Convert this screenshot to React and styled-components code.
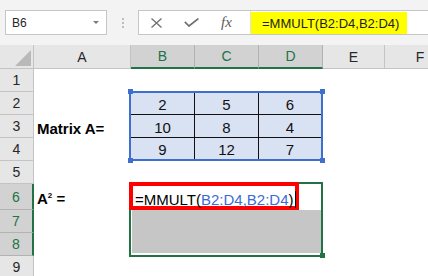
import styled, { createGlobalStyle } from "styled-components";

const GlobalStyle = createGlobalStyle`
  html, body {
    margin: 0;
    padding: 0;
    background: #fff;
  }
  body {
    font-family: "Liberation Sans", Arial, sans-serif;
  }
`;

const COLUMNS = ["A", "B", "C", "D", "E", "F"];
const ROWS = [1, 2, 3, 4, 5, 6, 7, 8, 9];
const SELECTED_COLS = ["B", "C", "D"];
const SELECTED_ROWS = [6, 7, 8];
const MATRIX = [
  [2, 5, 6],
  [10, 8, 4],
  [9, 12, 7],
];

export default function App() {
  return (
    <Page>
      <GlobalStyle />
      <Toolbar>
        <NameBox>
          <span>B6</span>
          <Caret />
        </NameBox>
        <Grip>
          <i />
          <i />
          <i />
        </Grip>
        <FormulaBox>
          <ToolButton>
            <svg width="11" height="10" viewBox="0 0 11 10">
              <path d="M0.5 0.5 L10.5 9.5 M10.5 0.5 L0.5 9.5" stroke="#6f6f6f" strokeWidth="1.3" fill="none" />
            </svg>
          </ToolButton>
          <ToolButton>
            <svg width="15" height="9" viewBox="0 0 15 9">
              <path d="M0.8 3.8 L5 8 L14.4 0.6" stroke="#6f6f6f" strokeWidth="1.7" fill="none" />
            </svg>
          </ToolButton>
          <ToolButton>
            <Fx>fx</Fx>
          </ToolButton>
          <FormulaInput>
            <Highlight>=MMULT(B2:D4,B2:D4)</Highlight>
          </FormulaInput>
        </FormulaBox>
      </Toolbar>

      <Sheet>
        <Corner>
          <svg width="16" height="16" viewBox="0 0 16 16">
            <polygon points="16,0 16,16 0,16" fill="#b9b9b9" />
          </svg>
        </Corner>
        {COLUMNS.map((c, i) => (
          <ColHeader key={c} $col={i + 2} $selected={SELECTED_COLS.includes(c)}>
            {c}
          </ColHeader>
        ))}
        {ROWS.map(r => (
          <RowHeader key={r} $row={r + 1} $selected={SELECTED_ROWS.includes(r)}>
            {r}
          </RowHeader>
        ))}

        <Label $row={4} $pad={1}>
          <span>Matrix A=</span>
        </Label>
        <Label $row={7} $pad={3}>
          <span>
            A<Sup>2</Sup> =
          </span>
        </Label>

        <Matrix>
          {MATRIX.map((row, ri) =>
            row.map((v, ci) => (
              <MatrixCell key={`${ri}-${ci}`} $lastCol={ci === 2} $lastRow={ri === 2}>
                {v}
              </MatrixCell>
            ))
          )}
          <Handle $v="top" $h="left" />
          <Handle $v="top" $h="right" />
          <Handle $v="bottom" $h="left" />
          <Handle $v="bottom" $h="right" />
        </Matrix>

        <Selection>
          <EditCell>
            =MMULT(<Ref>B2:D4,B2:D4</Ref>)<TextCursor />
          </EditCell>
          <GreyFill />
          <FillHandle />
        </Selection>
      </Sheet>
    </Page>
  );
}

const Page = styled.div`
  width: 428px;
  height: 276px;
  overflow: hidden;
  background: #fff;
`
const Toolbar = styled.div`
  height: 45px;
  box-sizing: border-box;
  display: flex;
  align-items: center;
  padding-left: 5px;
  background: #f3f3f3;
`
const NameBox = styled.div`
  width: 102px;
  height: 25px;
  box-sizing: border-box;
  border: 1px solid #c6c6c6;
  background: #fff;
  display: flex;
  align-items: center;
  justify-content: space-between;
  padding: 0 7px 0 6px;
  font-size: 12px;
  color: #262626;
`
const Caret = styled.span`
  width: 0;
  height: 0;
  border-left: 3px solid transparent;
  border-right: 3px solid transparent;
  border-top: 3px solid #7a7a7a;
`
const Grip = styled.div`
  width: 31px;
  display: flex;
  flex-direction: column;
  align-items: center;
  gap: 2px;
  i {
    width: 2px;
    height: 2px;
    background: #bdbdbd;
  }
`
const FormulaBox = styled.div`
  flex: 1;
  height: 25px;
  box-sizing: border-box;
  display: flex;
  background: #fff;
  border: 1px solid #c6c6c6;
  border-right: none;
`
const ToolButton = styled.div`
  width: 35px;
  display: flex;
  align-items: center;
  justify-content: center;
`
const Fx = styled.span`
  font-family: "Liberation Serif", "Times New Roman", serif;
  font-style: italic;
  font-size: 15px;
  color: #5c5c5c;
`
const FormulaInput = styled.div`
  flex: 1;
  margin-left: 6px;
  border-left: 1px solid #e1e1e1;
  display: flex;
  align-items: center;
`
const Highlight = styled.span`
  height: 22px;
  display: flex;
  align-items: center;
  padding: 1px 8px 0 11px;
  box-sizing: border-box;
  background: #ffff00;
  font-size: 13px;
  color: #1e1e1e;
  white-space: nowrap;
`
const Sheet = styled.div`
  display: grid;
  grid-template-columns: 34px 97px 64px 64px 64px 62px 71px;
  grid-template-rows: 24px repeat(5, 23px) 26px repeat(3, 23px);
`
const Corner = styled.div`
  grid-row: 1;
  grid-column: 1;
  background: #e6e6e6;
  border-right: 1px solid #c4c4c4;
  border-bottom: 1px solid #c4c4c4;
  display: flex;
  align-items: flex-end;
  justify-content: flex-end;
  padding: 0 2px 2px 0;
  svg { display: block; }
`
const ColHeader = styled.div`
  grid-row: 1;
  grid-column: ${p => p.$col};
  display: flex;
  align-items: center;
  justify-content: center;
  background: ${p => (p.$selected ? "#d2d2d2" : "#e6e6e6")};
  border-right: 1px solid ${p => (p.$selected ? "#b2b2b2" : "#c4c4c4")};
  border-bottom: ${p => (p.$selected ? "2px solid #217346" : "1px solid #c4c4c4")};
  font-size: 14px;
  line-height: 16px;
  color: ${p => (p.$selected ? "#217346" : "#262626")};
`
const RowHeader = styled.div`
  grid-column: 1;
  grid-row: ${p => p.$row};
  display: flex;
  align-items: center;
  justify-content: center;
  background: ${p => (p.$selected ? "#d2d2d2" : "#e6e6e6")};
  border-right: ${p => (p.$selected ? "2px solid #217346" : "1px solid #c4c4c4")};
  border-bottom: 1px solid ${p => (p.$selected ? "#b2b2b2" : "#c4c4c4")};
  font-size: 14px;
  line-height: 16px;
  color: ${p => (p.$selected ? "#217346" : "#262626")};
`
const Label = styled.div`
  grid-column: 2;
  grid-row: ${p => p.$row};
  display: flex;
  align-items: flex-end;
  padding: 0 0 ${p => p.$pad}px 3px;
  font-size: 15px;
  font-weight: 700;
  line-height: 17px;
  color: #000;
  white-space: pre;
`
const Sup = styled.sup`
  font-size: 8px;
  line-height: 0;
  vertical-align: 6px;
`
const Matrix = styled.div`
  grid-column: 3 / 6;
  grid-row: 3 / 6;
  margin: -1px 0 0 -2px;
  position: relative;
  border: 2px solid #3d6fcf;
  background: #d9e2f3;
  display: grid;
  grid-template-columns: 64px 64px 1fr;
  grid-template-rows: 22px 23px 1fr;
`
const MatrixCell = styled.div`
  display: flex;
  align-items: flex-end;
  justify-content: center;
  padding-bottom: 1px;
  border-right: ${p => (p.$lastCol ? "none" : "1px solid #111")};
  border-bottom: ${p => (p.$lastRow ? "none" : "1px solid #111")};
  font-size: 15px;
  line-height: 17px;
  color: #111;
`
const Handle = styled.span`
  position: absolute;
  width: 5px;
  height: 5px;
  background: #3d6fcf;
  ${p => p.$v}: -4px;
  ${p => p.$h}: ${p => (p.$h === "left" ? "-3px" : "-4px")};
`
const Selection = styled.div`
  grid-column: 3 / 6;
  grid-row: 7 / 10;
  margin: -2px 0 -1px -2px;
  position: relative;
  border: 2px solid #217346;
  background: #fff;
  display: flex;
  flex-direction: column;
`
const EditCell = styled.div`
  margin: -2px 0 0 -2px;
  width: 170px;
  height: 28px;
  flex-shrink: 0;
  box-sizing: border-box;
  border: 4px solid #ff0000;
  padding: 5px 0 0 2px;
  background: #fff;
  font-size: 15px;
  line-height: 16px;
  color: #000;
  white-space: nowrap;
  position: relative;
  z-index: 1;
`
const Ref = styled.span`
  color: #3b6bd6;
`
const TextCursor = styled.span`
  display: inline-block;
  width: 1px;
  height: 17px;
  margin-left: 1px;
  vertical-align: -3px;
  background: #000;
`
const GreyFill = styled.div`
  flex: 1;
  margin: 0 0 2px 1px;
  background: #c6c6c6;
`
const FillHandle = styled.span`
  position: absolute;
  right: -4px;
  bottom: -3px;
  width: 5px;
  height: 5px;
  background: #217346;
`
